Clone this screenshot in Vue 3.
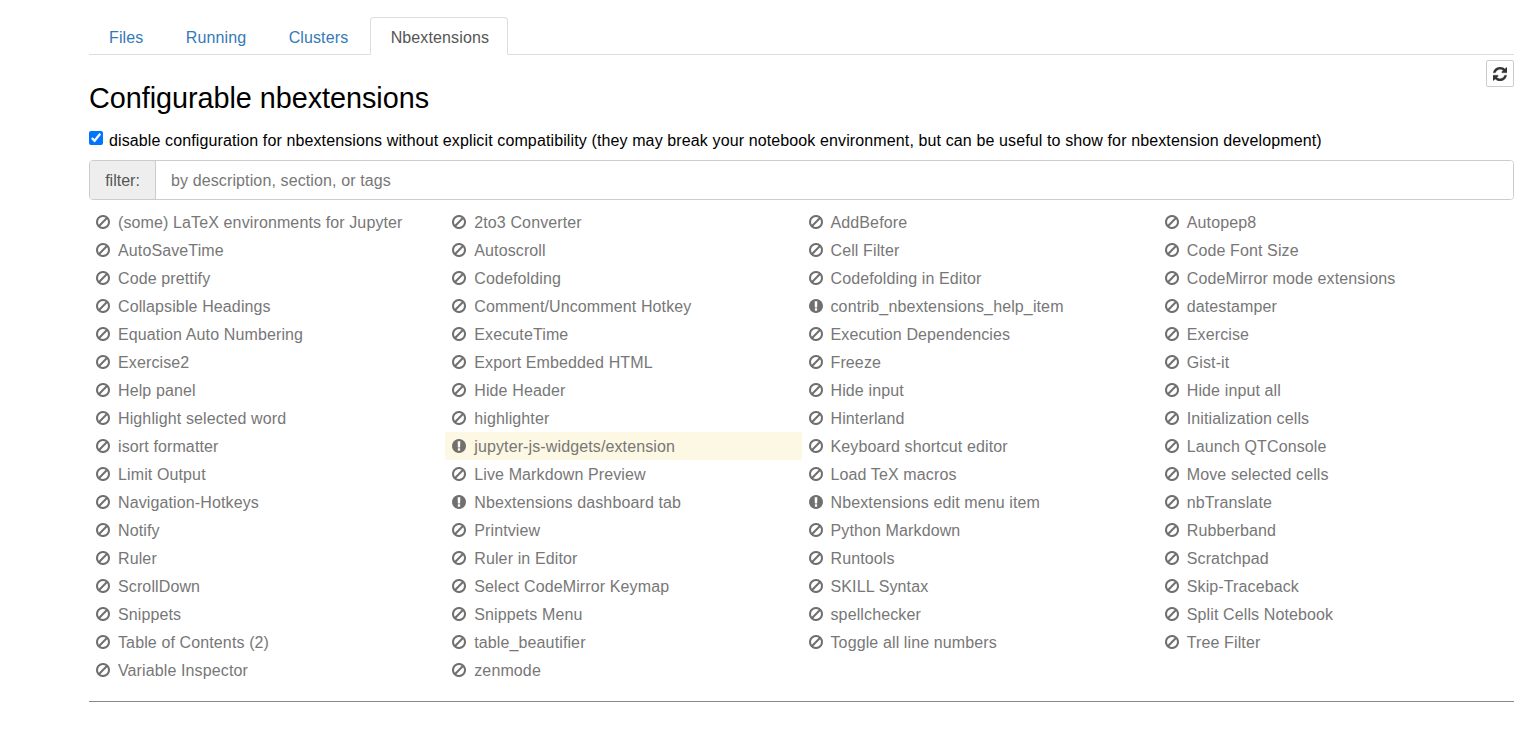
<script setup>
const tabs = ['Files', 'Running', 'Clusters', 'Nbextensions']
const warn = new Set(['contrib_nbextensions_help_item', 'jupyter-js-widgets/extension', 'Nbextensions dashboard tab', 'Nbextensions edit menu item'])
const names = [
  '(some) LaTeX environments for Jupyter', '2to3 Converter', 'AddBefore', 'Autopep8',
  'AutoSaveTime', 'Autoscroll', 'Cell Filter', 'Code Font Size',
  'Code prettify', 'Codefolding', 'Codefolding in Editor', 'CodeMirror mode extensions',
  'Collapsible Headings', 'Comment/Uncomment Hotkey', 'contrib_nbextensions_help_item', 'datestamper',
  'Equation Auto Numbering', 'ExecuteTime', 'Execution Dependencies', 'Exercise',
  'Exercise2', 'Export Embedded HTML', 'Freeze', 'Gist-it',
  'Help panel', 'Hide Header', 'Hide input', 'Hide input all',
  'Highlight selected word', 'highlighter', 'Hinterland', 'Initialization cells',
  'isort formatter', 'jupyter-js-widgets/extension', 'Keyboard shortcut editor', 'Launch QTConsole',
  'Limit Output', 'Live Markdown Preview', 'Load TeX macros', 'Move selected cells',
  'Navigation-Hotkeys', 'Nbextensions dashboard tab', 'Nbextensions edit menu item', 'nbTranslate',
  'Notify', 'Printview', 'Python Markdown', 'Rubberband',
  'Ruler', 'Ruler in Editor', 'Runtools', 'Scratchpad',
  'ScrollDown', 'Select CodeMirror Keymap', 'SKILL Syntax', 'Skip-Traceback',
  'Snippets', 'Snippets Menu', 'spellchecker', 'Split Cells Notebook',
  'Table of Contents (2)', 'table_beautifier', 'Toggle all line numbers', 'Tree Filter',
  'Variable Inspector', 'zenmode'
]
const banPath = 'M1312 893q0-161-87-295l-754 753q137 89 297 89 111 0 211.5-43.5t173.5-116.5 116-174.5 43-212.5zm-999 299l755-754q-135-91-300-91-148 0-273 73t-198 199-73 274q0 162 89 299zm1223-299q0 157-61 300t-163.5 246-245 164-298.5 61-298.5-61-245-164-163.5-246-61-300 61-299.5 163.5-245.5 245-164 298.5-61 298.5 61 245 164 163.5 245.5 61 299.5z'
const warnPath = 'M896 128q209 0 385.5 103t279.5 279.5 103 385.5-103 385.5-279.5 279.5-385.5 103-385.5-103-279.5-279.5-103-385.5 103-385.5 279.5-279.5 385.5-103zm128 1247v-190q0-14-9-23.5t-22-9.5h-192q-13 0-23 10t-10 23v190q0 13 10 23t23 10h192q13 0 22-9.5t9-23.5zm-2-344l18-621q0-12-10-18-10-8-24-8h-220q-14 0-24 8-10 6-10 18l17 621q0 10 10 17.5t24 7.5h185q14 0 23.5-7.5t10.5-17.5z'
const refreshPath = 'M1639 1056q0 5-1 7-64 268-268 434.5t-478 166.5q-146 0-282.5-55t-243.5-157l-129 129q-19 19-45 19t-45-19-19-45v-448q0-26 19-45t45-19h448q26 0 45 19t19 45-19 45l-137 137q71 66 161 102t187 36q134 0 250-65t186-179q11-17 53-117 8-23 30-23h192q13 0 22.5 9.5t9.5 22.5zm25-800v448q0 26-19 45t-45 19h-448q-26 0-45-19t-19-45 19-45l138-138q-148-137-349-137-134 0-250 65t-186 179q-11 17-53 117-8 23-30 23h-199q-13 0-22.5-9.5t-9.5-22.5v-7q65-268 270-434.5t480-166.5q146 0 284 55.5t245 156.5l130-129q19-19 45-19t45 19 19 45z'
</script>

<template>
  <div class="page">
    <ul class="tabs">
      <li v-for="t in tabs" :key="t" class="tab" :class="{ active: t === 'Nbextensions' }">{{ t }}</li>
    </ul>
    <div class="head">
      <button class="refresh" type="button" aria-label="Refresh">
        <svg viewBox="128 128 1536 1536" width="14" height="14"><path :d="refreshPath" fill="#333" stroke="#333" stroke-width="30" /></svg>
      </button>
      <h2 class="title">Configurable nbextensions</h2>
    </div>
    <label class="compat">
      <input type="checkbox" checked />
      <span>disable configuration for nbextensions without explicit compatibility (they may break your notebook environment, but can be useful to show for nbextension development)</span>
    </label>
    <div class="filter">
      <span class="addon">filter:</span>
      <input class="field" type="text" placeholder="by description, section, or tags" />
    </div>
    <ul class="list">
      <li v-for="n in names" :key="n" class="item" :class="{ hover: n === 'jupyter-js-widgets/extension' }">
        <svg class="ico" :viewBox="warn.has(n) ? '128 128 1536 1536' : '0 125 1536 1536'" width="14" height="14"><path :d="warn.has(n) ? warnPath : banPath" fill="#707070" /></svg>
        <span class="label">{{ n }}</span>
      </li>
    </ul>
    <hr class="rule" />
  </div>
</template>

<style>
html, body { background: #fff; }
</style>

<style scoped>
.page {
  box-sizing: border-box;
  width: 1529px;
  padding: 17px 15px 0 89px;
  font-family: "Liberation Sans", Arial, sans-serif;
  font-size: 16px;
  letter-spacing: 0.12px;
  color: #000;
}
.tabs {
  list-style: none;
  margin: 0;
  padding: 0;
  display: flex;
  gap: 2.4px;
  height: 37px;
  border-bottom: 1px solid #ddd;
}
.tab {
  box-sizing: border-box;
  height: 38px;
  padding: 0 19px;
  line-height: 40px;
  color: #337ab7;
  border: 1px solid transparent;
  border-radius: 4px 4px 0 0;
}
.tab.active {
  margin-left: -1px;
  padding: 0 18px 0 20px;
  color: #555;
  background: #fff;
  border-color: #ddd #ddd #fff;
}
.head {
  display: flex;
  flex-direction: column;
}
.refresh {
  align-self: flex-end;
  box-sizing: border-box;
  width: 28px;
  height: 27px;
  margin-top: 5px;
  padding: 0;
  display: flex;
  align-items: center;
  justify-content: center;
  background: #fff;
  border: 1px solid #ccc;
  border-radius: 2px;
}
.title {
  margin: -5px 0 0;
  font-size: 28.8px;
  font-weight: 400;
  letter-spacing: -0.04px;
  line-height: 33px;
}
.compat {
  display: flex;
  align-items: center;
  gap: 6px;
  margin-top: 13px;
  height: 24px;
  white-space: nowrap;
}
.compat span {
  padding-top: 2px;
}
.compat input {
  width: 14px;
  height: 14px;
  margin: 0 0 5px;
}
.filter {
  display: flex;
  box-sizing: border-box;
  height: 40px;
  margin-top: 8px;
  line-height: 20px;
  border: 1px solid #ccc;
  border-radius: 4px;
  overflow: hidden;
}
.addon {
  box-sizing: border-box;
  width: 66px;
  padding-top: 2px;
  display: flex;
  align-items: center;
  justify-content: center;
  background: #eee;
  color: #555;
  letter-spacing: 0;
  border-right: 1px solid #ccc;
}
.field {
  flex: 1;
  min-width: 0;
  border: 0;
  outline: 0;
  padding: 2px 15px 0;
  font: inherit;
  letter-spacing: inherit;
  color: #555;
}
.field::placeholder { color: #777; opacity: 1; }
.list {
  list-style: none;
  margin: 8px 0 0;
  padding: 0;
  display: grid;
  grid-template-columns: repeat(4, 1fr);
  grid-auto-rows: 28px;
}
.item {
  display: flex;
  align-items: center;
  gap: 8px;
  padding-left: 7px;
  color: #777;
  border-radius: 2px;
  white-space: nowrap;
}
.label { padding-top: 2px; }
.item.hover { background: #fcf8e3; }
.ico { flex: none; }
.rule {
  margin: 17px 0 0;
  border: 0;
  border-top: 1px solid #888;
}
</style>
